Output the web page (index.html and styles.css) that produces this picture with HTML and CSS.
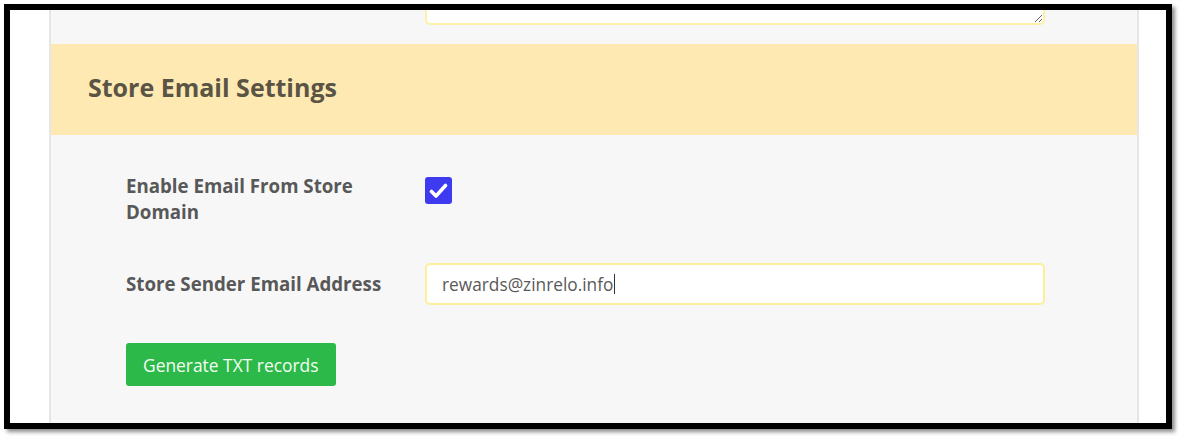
FILE: index.html
```html
<!DOCTYPE html>
<html>
<head>
    <title>Store Email Settings</title>
    <meta charset="UTF-8">
    <meta name="viewport" content="width=device-width, initial-scale=1.0">
    <link rel="stylesheet" href="styles.css">
</head>
<body>
    <div class="frame">
        <div class="panel">
            <div class="top-row">
                <textarea class="notes"></textarea>
            </div>

            <div class="section-head">
                <h2>Store Email Settings</h2>
            </div>

            <div class="section-body">
                <div class="form-row">
                    <label class="field-label">Enable Email From Store Domain</label>
                    <div class="field">
                        <span class="checkbox">
                            <svg width="19" height="16" viewBox="0 0 19 16">
                                <path d="M2.5 8.5 L7 13 L16.5 2.5" fill="none" stroke="#fff" stroke-width="3.6" stroke-linecap="round" stroke-linejoin="round"/>
                            </svg>
                        </span>
                    </div>
                </div>

                <div class="form-row row-center">
                    <label class="field-label">Store Sender Email Address</label>
                    <div class="field">
                        <div class="text-input">rewards@zinrelo.info<span class="caret"></span></div>
                    </div>
                </div>

                <button class="green-button">Generate TXT records</button>
            </div>
        </div>
    </div>
</body>
</html>
```

FILE: styles.css
```css
/* Reset */
* {
    box-sizing: border-box;
    margin: 0;
    padding: 0;
}

body {
    background: #ffffff;
    font-family: 'Open Sans', sans-serif;
    height: 442px;
    overflow: hidden;
}

/* Screenshot frame */
.frame {
    margin: 4px 0 0 4px;
    width: 1168px;
    height: 425px;
    border: 6px solid #000;
    background: #ffffff;
    box-shadow: 3px 3px 4px rgba(0, 0, 0, 0.45);
    overflow: hidden;
}

/* Panel */
.panel {
    margin-left: 39px;
    width: 1090px;
    height: 100%;
    background: #f7f7f7;
    border-left: 2px solid #e6e6e6;
    border-right: 2px solid #e6e6e6;
}

/* Textarea from the section above, cut off by the frame */
.top-row {
    height: 34px;
    padding: 0 0 19px 374px;
    display: flex;
    align-items: flex-end;
    overflow: hidden;
}

.notes {
    display: block;
    flex-shrink: 0;
    width: 620px;
    height: 80px;
    border: 2px solid #fdf1a6;
    border-radius: 5px;
    background: #fff;
    resize: vertical;
}

/* Section header */
.section-head {
    height: 91px;
    background: #ffe9b3;
    display: flex;
    align-items: center;
    padding-left: 37px;
}

.section-head h2 {
    font-size: 25px;
    font-weight: 700;
    color: #5a5444;
    margin-top: -6px;
}

/* Section body */
.section-body {
    padding: 38px 0 0 75px;
}

.form-row {
    display: flex;
    align-items: flex-start;
    margin-bottom: 38px;
}

.row-center {
    align-items: center;
}

.field-label {
    width: 299px;
    padding-right: 40px;
    font-size: 18.7px;
    font-weight: 700;
    line-height: 26px;
    color: #585858;
}

.field {
    flex: 1;
}

.checkbox {
    display: flex;
    align-items: center;
    justify-content: center;
    width: 27px;
    height: 27px;
    margin-top: 4px;
    background: #3d3af0;
    border-radius: 3px;
}

.text-input {
    width: 620px;
    height: 42px;
    border: 2px solid #fbef9c;
    border-radius: 5px;
    background: #fff;
    padding-left: 15px;
    font-size: 17.3px;
    color: #595959;
    display: flex;
    align-items: center;
}

.caret {
    display: inline-block;
    width: 1px;
    height: 20px;
    background: #333;
    margin-left: 1px;
}

.green-button {
    height: 43px;
    padding: 0 17px;
    background: #2db84a;
    border: none;
    border-radius: 3px;
    color: #f2fff2;
    font-family: 'Open Sans', sans-serif;
    font-size: 17.4px;
}
```
